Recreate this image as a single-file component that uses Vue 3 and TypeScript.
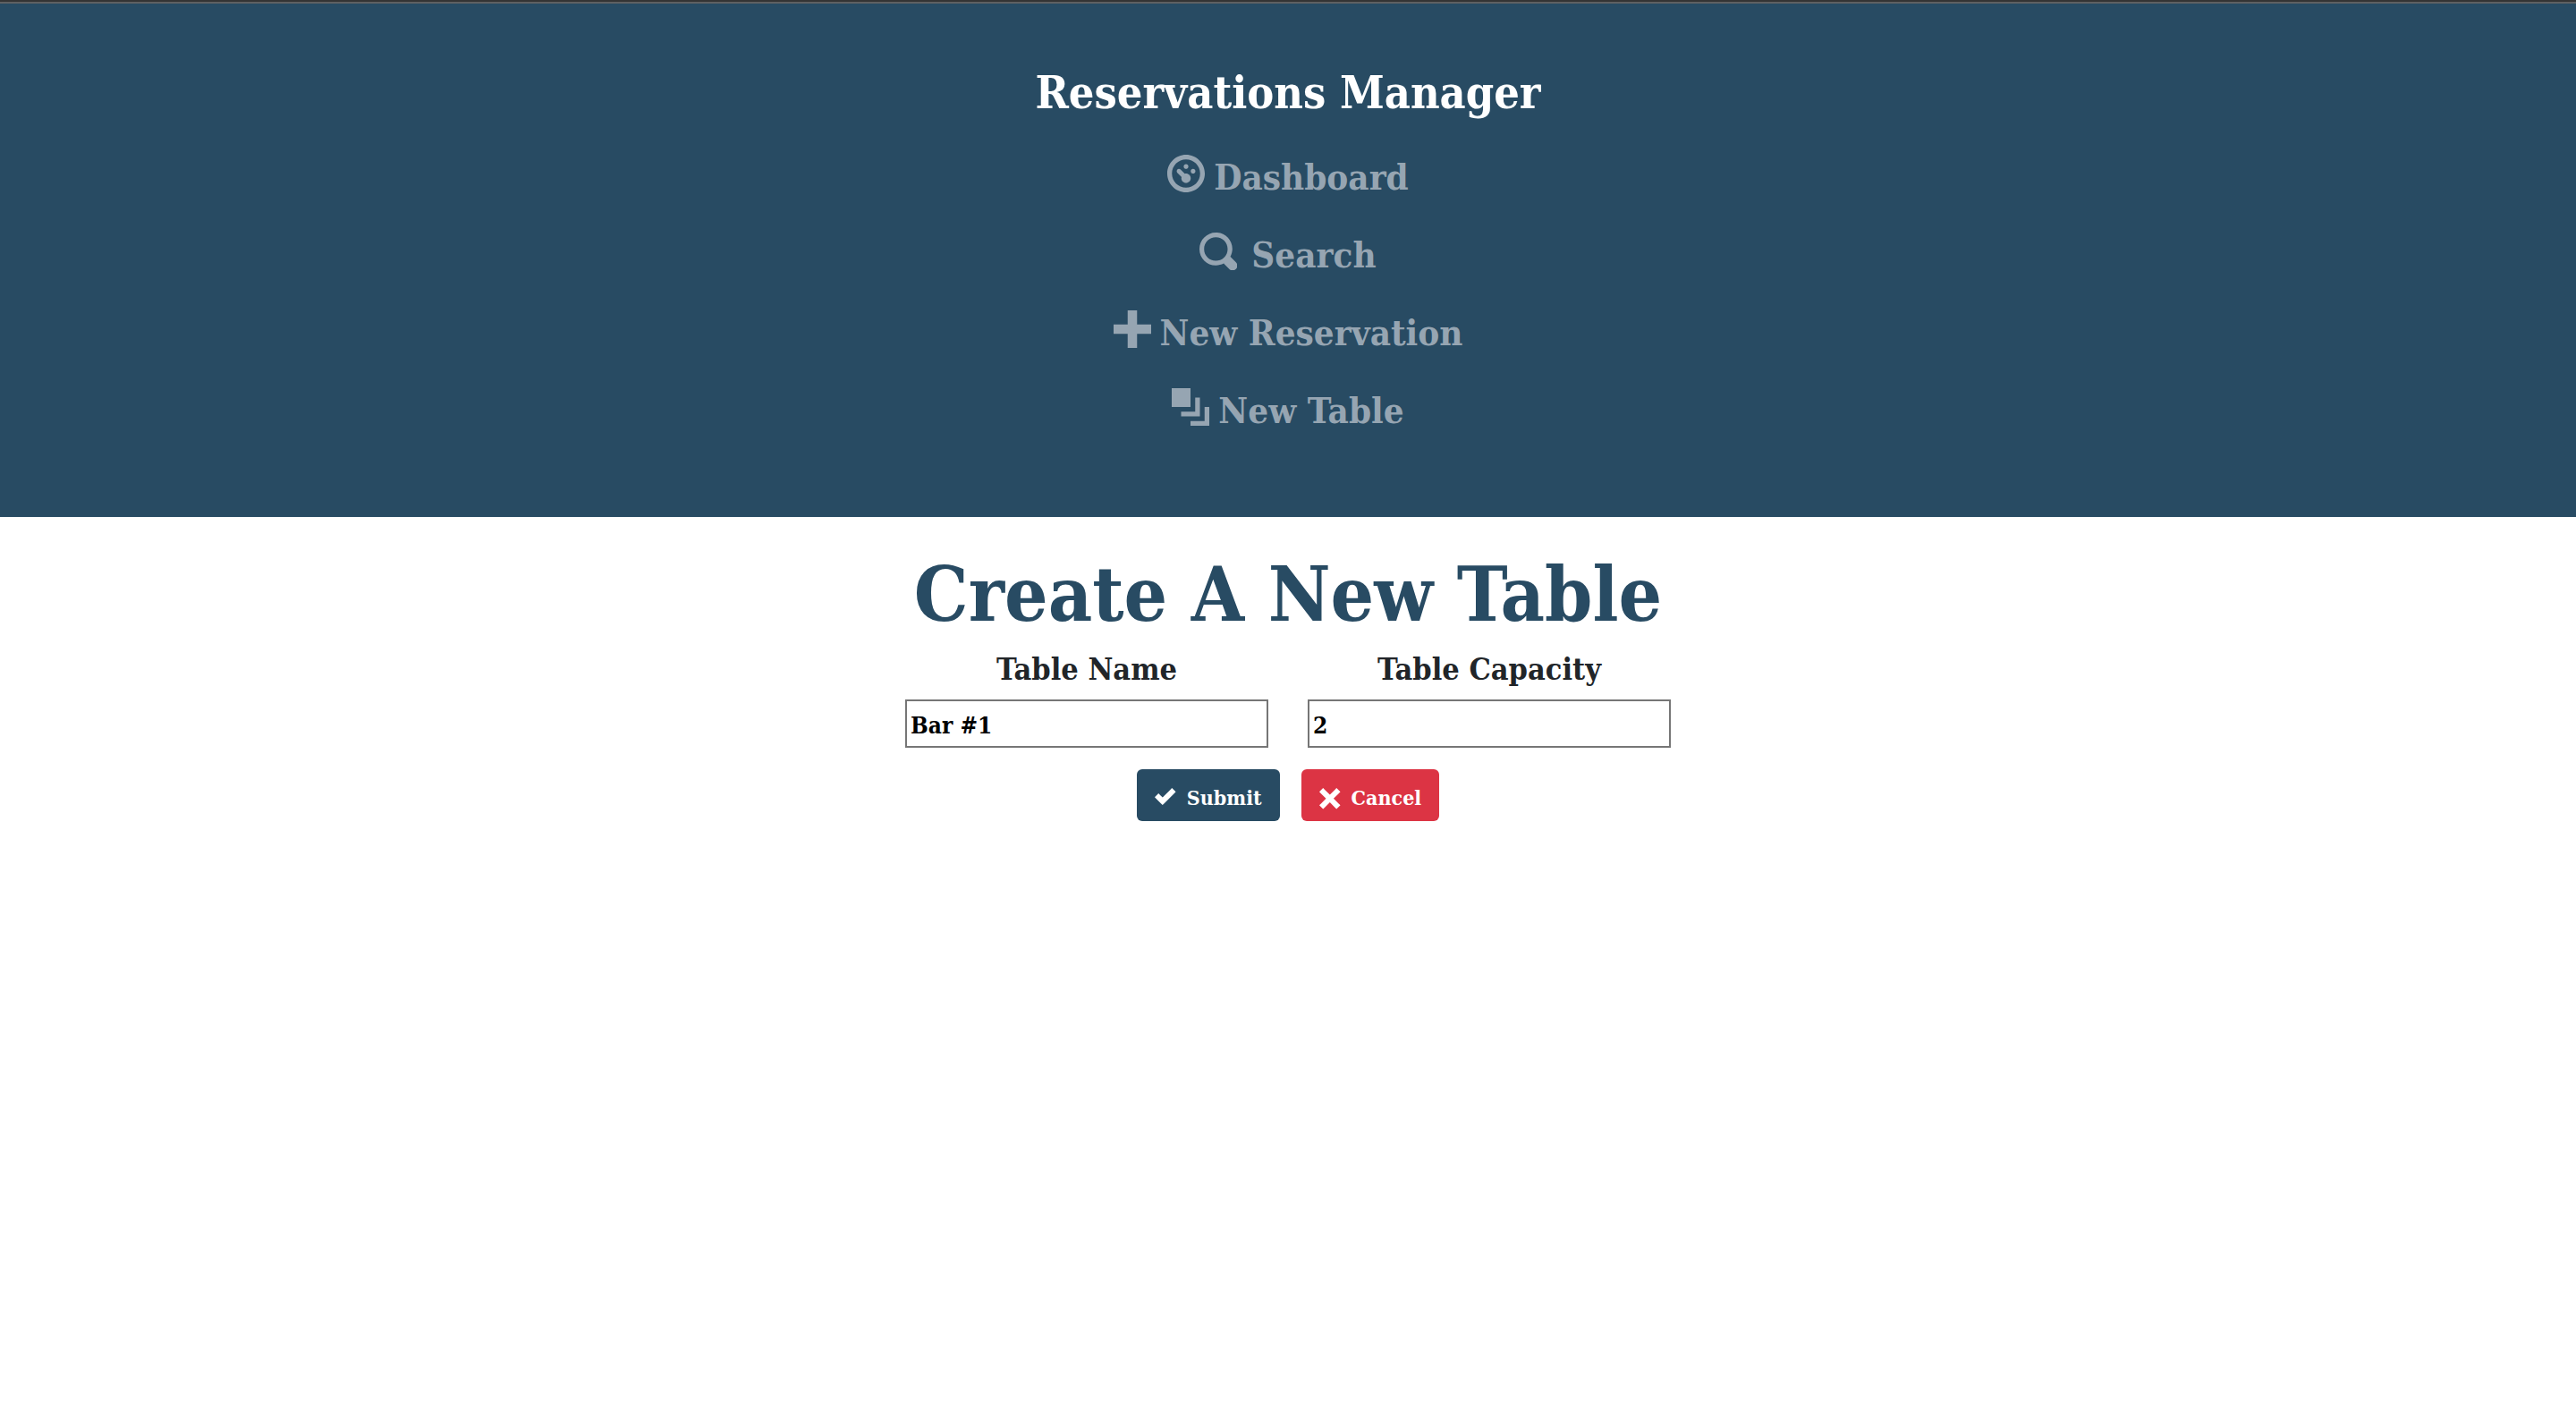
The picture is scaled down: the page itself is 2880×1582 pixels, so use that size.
<script setup lang="ts">
import { ref } from 'vue'

interface NavItem {
  label: string
  icon: string
  wide?: boolean
}

const navItems: NavItem[] = [
  {
    label: 'Dashboard',
    icon: 'M4 0c-2.2 0-4 1.8-4 4s1.8 4 4 4 4-1.8 4-4-1.8-4-4-4zm0 1c1.66 0 3 1.34 3 3s-1.34 3-3 3-3-1.34-3-3 1.34-3 3-3zm0 1c-.28 0-.5.22-.5.5s.22.5.5.5.5-.22.5-.5-.22-.5-.5-.5zm-1.56 1a.5.5 0 0 0-.29.84l.91.91c-.02.08-.06.16-.06.25 0 .55.45 1 1 1s1-.45 1-1-.45-1-1-1c-.09 0-.17.04-.25.06l-.91-.91a.5.5 0 0 0-.4-.15zm3.06 0c-.28 0-.5.22-.5.5s.22.5.5.5.5-.22.5-.5-.22-.5-.5-.5z',
  },
  {
    label: 'Search',
    wide: true,
    icon: 'M3.5 0c-1.93 0-3.5 1.57-3.5 3.5s1.57 3.5 3.5 3.5c.59 0 1.17-.14 1.66-.41a1 1 0 0 0 .13.13l1 1a1.02 1.02 0 1 0 1.44-1.44l-1-1a1 1 0 0 0-.16-.13c.27-.49.44-1.06.44-1.66 0-1.93-1.55-3.5-3.5-3.5zm0 1c1.39 0 2.5 1.11 2.5 2.5 0 .66-.24 1.27-.66 1.72l-.03.03a1 1 0 0 0-.13.13c-.44.4-1.04.63-1.69.63-1.39 0-2.5-1.11-2.5-2.5s1.11-2.5 2.5-2.5z',
  },
  { label: 'New Reservation', icon: 'M3 0v3h-3v2h3v3h2v-3h3v-2h-3v-3h-2z' },
  {
    label: 'New Table',
    icon: 'M0 0v4h4v-4h-4zm5 2v3h-3v1h4v-4h-1zm2 2v3h-3v1h4v-4h-1z',
  },
]

const tableName = ref('Bar #1')
const capacity = ref('2')
</script>

<template>
  <div class="page">
    <header class="menu">
      <a class="brand" href="#">Reservations Manager</a>
      <nav>
        <ul class="links">
          <li v-for="item in navItems" :key="item.label">
            <a class="link" :class="{ wide: item.wide }" href="#">
              <svg class="link-icon" viewBox="0 0 8 8" aria-hidden="true">
                <path :d="item.icon" />
              </svg>
              <span>{{ item.label }}</span>
            </a>
          </li>
        </ul>
      </nav>
    </header>

    <main class="content">
      <h1>Create A New Table</h1>
      <form @submit.prevent>
        <div class="fields">
          <div class="field">
            <label for="table-name">Table Name</label>
            <input id="table-name" v-model="tableName" type="text" />
          </div>
          <div class="field">
            <label for="capacity">Table Capacity</label>
            <input id="capacity" v-model="capacity" type="text" inputmode="numeric" />
          </div>
        </div>
        <div class="actions">
          <button class="submit" type="submit">
            <svg viewBox="0 0 8 8" aria-hidden="true">
              <path d="M6.41 0l-.69.72-2.78 2.78-.81-.78-.72-.72-1.41 1.41.72.72 1.5 1.5.69.72.72-.72 3.5-3.5.72-.72-1.44-1.41z" />
            </svg>
            <span>Submit</span>
          </button>
          <button class="cancel" type="button">
            <svg viewBox="0 0 8 8" aria-hidden="true">
              <path d="M1.41 0l-1.41 1.41.72.72 1.78 1.81-1.78 1.78-.72.69 1.41 1.44.72-.72 1.81-1.81 1.78 1.81.69.72 1.44-1.44-.72-.69-1.81-1.78 1.81-1.81.72-.72-1.44-1.41-.69.72-1.78 1.78-1.81-1.78-.72-.72z" />
            </svg>
            <span>Cancel</span>
          </button>
        </div>
      </form>
    </main>
  </div>
</template>

<style>
body {
  background: #fff;
}
</style>

<style scoped>
.page {
  border-top: 2px solid #343434;
  color: #212529;
  font-family: 'DejaVu Serif Condensed', 'DejaVu Serif', serif;
  font-weight: 700;
}

.menu {
  display: flex;
  flex-direction: column;
  align-items: center;
  padding: 64px 32px 76px;
  border-top: 2px solid #5f6062;
  background: #284b63;
}

.brand {
  color: #fff;
  font-size: 50px;
  line-height: 72px;
  text-decoration: none;
}

.links {
  margin: 14px 0 0;
  padding: 0;
  list-style: none;
}

.links li {
  display: flex;
  justify-content: center;
}

.link {
  display: flex;
  align-items: center;
  gap: 10px;
  height: 87px;
  color: #96a5b2;
  font-size: 40px;
  line-height: 56px;
  text-decoration: none;
}

.link.wide {
  gap: 16px;
}

.link-icon {
  width: 42px;
  height: 42px;
  margin-bottom: 8px;
  fill: currentColor;
}

.content {
  padding: 32px 32px 64px;
}

h1 {
  margin: 0;
  color: #284b63;
  font-size: 85px;
  font-weight: 700;
  line-height: 108px;
  text-align: center;
}

.fields {
  display: flex;
  justify-content: center;
  gap: 44px;
}

.field {
  display: flex;
  flex-direction: column;
  width: 406px;
}

label {
  margin-bottom: 4px;
  font-size: 34px;
  line-height: 60px;
  text-align: center;
}

input {
  box-sizing: border-box;
  width: 100%;
  height: 54px;
  padding: 4px 4px 0;
  border: 2px solid #767676;
  border-radius: 0;
  background: #fff;
  color: #000;
  font: inherit;
  font-size: 26px;
}

.actions {
  display: flex;
  justify-content: center;
  gap: 24px;
  margin-top: 24px;
}

button {
  display: flex;
  align-items: center;
  justify-content: center;
  gap: 12px;
  height: 58px;
  padding: 4px 20px 0;
  border: 0;
  border-radius: 6px;
  color: #fff;
  font: inherit;
  font-size: 23px;
}

button svg {
  width: 24px;
  height: 24px;
  margin-top: 4px;
  fill: currentColor;
}

.submit {
  background: #284b63;
}

.cancel {
  background: #dc3444;
}
</style>
